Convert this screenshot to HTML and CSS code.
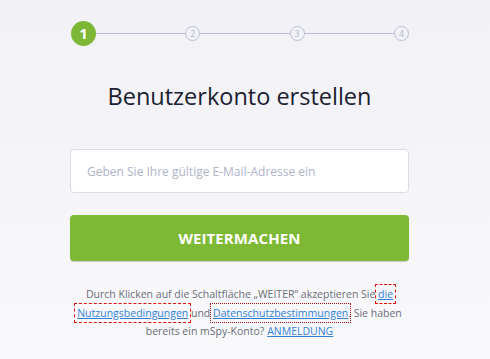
FILE: index.html
```html
<!DOCTYPE html>
<html lang="de">
<head>
<meta charset="utf-8">
<link rel="stylesheet" href="styles.css">
</head>
<body>
<main class="wrap">
  <div class="steps">
    <div class="line"></div>
    <span class="step active">1</span>
    <span class="step">2</span>
    <span class="step">3</span>
    <span class="step">4</span>
  </div>
  <h1 class="title">Benutzerkonto erstellen</h1>
  <input class="email" type="text" placeholder="Geben Sie Ihre gültige E-Mail-Adresse ein">
  <button class="btn">WEITERMACHEN</button>
  <p class="terms">Durch Klicken auf die Schaltfläche „WEITER“ akzeptieren Sie <a href="#" class="mark-dash">die</a> <a href="#" class="mark-dash">Nutzungsbedingungen</a> und <a href="#" class="mark-dot">Datenschutzbestimmungen</a>. Sie haben bereits ein mSpy-Konto? <a href="#">ANMELDUNG</a></p>
</main>
</body>
</html>
```

FILE: styles.css
```css
html, body {
  margin: 0;
  height: 100%;
}
body {
  background: linear-gradient(#f1f1f6, #f9f9fb);
  font-family: "Open Sans", "Liberation Sans", sans-serif;
}
.wrap {
  width: 339px;
  margin-left: 70px;
  padding-top: 21px;
  display: flex;
  flex-direction: column;
}
.steps {
  position: relative;
  display: flex;
  justify-content: space-between;
  align-items: center;
  height: 25px;
  padding-left: 1px;
}
.line {
  position: absolute;
  left: 20px;
  right: 6px;
  top: 12px;
  height: 1px;
  background: #b9bfd3;
}
.step {
  position: relative;
  width: 13px;
  height: 13px;
  border: 1px solid #b9bfd3;
  border-radius: 50%;
  background: #f3f3f7;
  color: #b0b6cc;
  font-size: 9px;
  line-height: 13px;
  text-align: center;
}
.step.active {
  width: 25px;
  height: 25px;
  border: none;
  background: #7db735;
  color: #fff;
  font-size: 15px;
  font-weight: 700;
  line-height: 25px;
}
.title {
  margin: 34px 0 0;
  text-align: center;
  font-size: 23.5px;
  font-weight: 400;
  color: #1b2130;
  line-height: 32px;
}
.email {
  margin-top: 37px;
  height: 44px;
  box-sizing: border-box;
  border: 1px solid #dcdde3;
  border-radius: 4px;
  background: #fff;
  padding: 0 16px;
  font-family: inherit;
  font-size: 12px;
  outline: none;
}
.email::placeholder {
  color: #aeb4c8;
}
.btn {
  margin-top: 22px;
  height: 46px;
  border: none;
  border-radius: 4px;
  background: #7db935;
  box-shadow: 0 1px 1px rgba(0,0,0,0.18);
  color: #fff;
  font-family: inherit;
  font-size: 15px;
  font-weight: 700;
  letter-spacing: 0.1px;
}
.terms {
  margin: 24px 0 0;
  text-align: center;
  font-size: 10.5px;
  line-height: 18.5px;
  color: #6a6d78;
}
.terms a {
  color: #2f7fd9;
}
.mark-dash {
  outline: 1px dashed #e01010;
  outline-offset: 2px;
}
.mark-dot {
  outline: 1px dotted #a01010;
  outline-offset: 2px;
}
```
